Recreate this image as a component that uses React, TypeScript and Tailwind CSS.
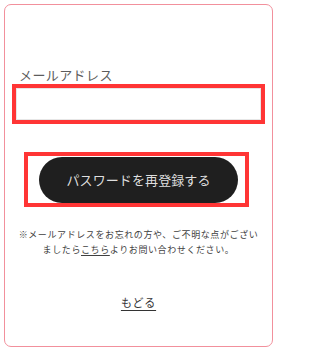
export default function App() {
  return (
    <div className="min-h-[358px] w-[277px] bg-white p-[4px] font-['Noto_Sans_CJK_JP','Noto_Sans',sans-serif]">
      <div className="flex h-[343px] flex-col rounded-[7px] border border-[#f2909c] px-[7px] pt-[61px]">
        <label className="block pl-[7px] text-[13px] leading-[18px] tracking-[0.4px] text-[#5c5c5c]">
          メールアドレス
        </label>

        {/* highlighted input */}
        <div className="h-[40px] border-4 border-[#ff3535]">
          <input
            type="email"
            className="h-full w-full border border-[#e6e6e6] bg-white px-2 text-[13px] outline-none"
          />
        </div>

        {/* highlighted submit */}
        <div className="mt-[28px] ml-[12px] w-[225px] border-4 border-[#ff3535] pt-[1px] pl-[11px] pr-[7px]">
          <button
            type="button"
            className="flex h-[46px] w-[199px] items-center justify-center rounded-full bg-[#1f1f1f] text-[13px] tracking-[0.1px] text-[#dedede]"
          >
            パスワードを再登録する
          </button>
        </div>

        <p className="mt-[20px] whitespace-nowrap text-center text-[9px] leading-[15px] tracking-[0.6px] text-[#3f3f3f]">
          ※メールアドレスをお忘れの方や、ご不明な点がござい
          <br />
          ましたら
          <a href="#" className="underline underline-offset-2">こちら</a>
          よりお問い合わせください。
        </p>

        <div className="mt-[31px] text-center">
          <a href="#" className="text-[11px] leading-[16px] tracking-[0.8px] text-[#333] underline underline-offset-[3px]">
            もどる
          </a>
        </div>
      </div>
    </div>
  );
}
